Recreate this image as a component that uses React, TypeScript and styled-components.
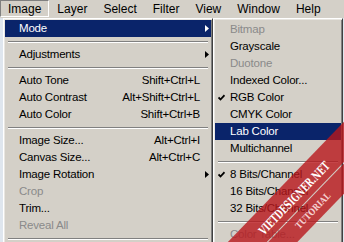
import { FC } from 'react';
import styled, { createGlobalStyle } from 'styled-components';

const GlobalStyle = createGlobalStyle`
  html, body {
    margin: 0;
    padding: 0;
    background: #dfe6ee;
  }
`;

const Screen = styled.div`
  position: relative;
  width: 344px;
  height: 242px;
  overflow: hidden;
  background: #dfe6ee;
  font-family: 'Liberation Sans', Arial, sans-serif;
`;

const MenuBar = styled.div`
  display: flex;
  height: 18px;
  background: #d4d0c8;
`;

const BarItem = styled.div<{ $pressed?: boolean }>`
  box-sizing: border-box;
  height: 17px;
  padding: 0 7px;
  font-size: 12px;
  line-height: 16px;
  color: #000;
  white-space: nowrap;
  border: 1px solid transparent;
  border-color: ${(p) =>
    p.$pressed ? '#808080 #fff #fff #808080' : 'transparent'};
`;

const Menus = styled.div`
  display: flex;
  padding-left: 3px;
`;

const MenuPanel = styled.div<{ $width: number; $top: number }>`
  box-sizing: border-box;
  width: ${(p) => p.$width}px;
  height: 240px;
  padding-top: ${(p) => p.$top}px;
  background: #d4d0c8;
  border: 1px solid;
  border-color: #fff #404040 #404040 #fff;
  box-shadow: inset 1px 1px #e8e6e1, inset -1px -1px #808080;
`;

const Row = styled.div<{ $lead: number; $active?: boolean; $disabled?: boolean }>`
  display: grid;
  grid-template-columns: ${(p) => p.$lead}px 1fr auto 11px;
  align-items: center;
  height: 17px;
  margin: 0 1px;
  font-size: 11.5px;
  letter-spacing: -0.2px;
  line-height: 17px;
  white-space: nowrap;
  background: ${(p) => (p.$active ? '#0a246a' : 'transparent')};
  color: ${(p) => (p.$active ? '#fff' : p.$disabled ? '#8a8a8a' : '#000')};
`;

const Lead = styled.span`
  display: flex;
  align-items: center;
  padding-left: 3px;
`;

const Shortcut = styled.span`
  text-align: right;
`;

const ArrowCell = styled.span`
  display: flex;
  justify-content: flex-end;
  padding-right: 2px;
`;

const Separator = styled.div`
  height: 9px;
  margin: 0 4px;
  display: flex;
  flex-direction: column;
  justify-content: center;

  &::before {
    content: '';
    height: 1px;
    background: #808080;
  }
  &::after {
    content: '';
    height: 1px;
    background: #fff;
  }
`;

const Watermark = styled.svg`
  position: absolute;
  left: 0;
  top: 0;
  pointer-events: none;
`;

const Arrow: FC<{ light?: boolean }> = ({ light }) => (
  <svg width="4" height="7" viewBox="0 0 4 7">
    <polygon points="0,0 4,3.5 0,7" fill={light ? '#fff' : '#000'} />
  </svg>
);

const Check: FC = () => (
  <svg width="7" height="7" viewBox="0 0 7 7">
    <path d="M0.5 3.5 L2.5 5.5 L6.5 1.2" stroke="#000" strokeWidth="1.8" fill="none" />
  </svg>
);

type Item = {
  label?: string;
  keys?: string;
  sub?: boolean;
  active?: boolean;
  disabled?: boolean;
  checked?: boolean;
  sep?: boolean;
};

const imageMenu: Item[] = [
  { label: 'Mode', sub: true, active: true },
  { sep: true },
  { label: 'Adjustments', sub: true },
  { sep: true },
  { label: 'Auto Tone', keys: 'Shift+Ctrl+L' },
  { label: 'Auto Contrast', keys: 'Alt+Shift+Ctrl+L' },
  { label: 'Auto Color', keys: 'Shift+Ctrl+B' },
  { sep: true },
  { label: 'Image Size...', keys: 'Alt+Ctrl+I' },
  { label: 'Canvas Size...', keys: 'Alt+Ctrl+C' },
  { label: 'Image Rotation', sub: true },
  { label: 'Crop', disabled: true },
  { label: 'Trim...' },
  { label: 'Reveal All', disabled: true },
  { sep: true },
];

const modeMenu: Item[] = [
  { label: 'Bitmap', disabled: true },
  { label: 'Grayscale' },
  { label: 'Duotone', disabled: true },
  { label: 'Indexed Color...' },
  { label: 'RGB Color', checked: true },
  { label: 'CMYK Color' },
  { label: 'Lab Color', active: true },
  { label: 'Multichannel' },
  { sep: true },
  { label: '8 Bits/Channel', checked: true },
  { label: '16 Bits/Channel' },
  { label: '32 Bits/Channel' },
  { sep: true },
  { label: 'Color Table...', disabled: true },
];

const MenuList: FC<{ items: Item[]; lead: number }> = ({ items, lead }) => (
  <>
    {items.map((it, i) =>
      it.sep ? (
        <Separator key={i} />
      ) : (
        <Row key={i} $lead={lead} $active={it.active} $disabled={it.disabled}>
          <Lead>{it.checked && <Check />}</Lead>
          <span>{it.label}</span>
          <Shortcut>{it.keys}</Shortcut>
          <ArrowCell>{it.sub && <Arrow light={it.active} />}</ArrowCell>
        </Row>
      )
    )}
  </>
);

const App: FC = () => {
  const bar = ['Image', 'Layer', 'Select', 'Filter', 'View', 'Window', 'Help'];

  return (
    <>
      <GlobalStyle />
      <Screen>
        <MenuBar>
          {bar.map((b, i) => (
            <BarItem key={b} $pressed={i === 0}>
              {b}
            </BarItem>
          ))}
        </MenuBar>
        <Menus>
          <MenuPanel $width={210} $top={1}>
            <MenuList items={imageMenu} lead={14} />
          </MenuPanel>
          <MenuPanel $width={130} $top={2}>
            <MenuList items={modeMenu} lead={15} />
          </MenuPanel>
        </Menus>

        {/* logo ribbon in the corner */}
        <Watermark width="344" height="242" viewBox="0 0 344 242">
          <g transform="translate(294 198) rotate(-46)">
            <rect x="-130" y="-17" width="260" height="28" fill="#b8161c" opacity="0.8" />
            <rect x="-130" y="12" width="260" height="21" fill="#b8161c" opacity="0.8" />
            <text
              x="0"
              y="0"
              dy="4.5"
              textAnchor="middle"
              textLength="96"
              lengthAdjust="spacingAndGlyphs"
              fontFamily="'DejaVu Serif', serif"
              fontWeight="bold"
              fontSize="12"
              fill="#fff"
            >
              VIETDESIGNER.NET
            </text>
            <text
              x="4"
              y="22"
              dy="3.5"
              textAnchor="middle"
              textLength="46"
              lengthAdjust="spacingAndGlyphs"
              fontFamily="'DejaVu Serif', serif"
              fontWeight="bold"
              fontSize="9"
              fill="#f4d0d0"
            >
              TUTORIAL
            </text>
          </g>
        </Watermark>
      </Screen>
    </>
  );
};

export default App;
